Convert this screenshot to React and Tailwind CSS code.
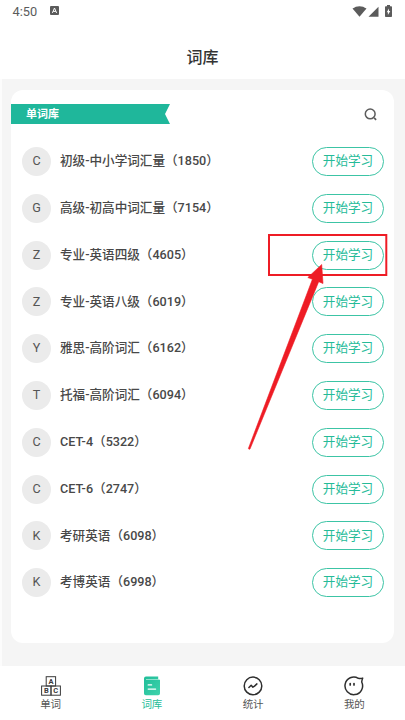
import { useState } from 'react';

const WORD_BOOKS = [
  { letter: 'C', name: '初级-中小学词汇量（1850）' },
  { letter: 'G', name: '高级-初高中词汇量（7154）' },
  { letter: 'Z', name: '专业-英语四级（4605）' },
  { letter: 'Z', name: '专业-英语八级（6019）' },
  { letter: 'Y', name: '雅思-高阶词汇（6162）' },
  { letter: 'T', name: '托福-高阶词汇（6094）' },
  { letter: 'C', name: 'CET-4（5322）' },
  { letter: 'C', name: 'CET-6（2747）' },
  { letter: 'K', name: '考研英语（6098）' },
  { letter: 'K', name: '考博英语（6998）' },
];

function BlocksIcon() {
  return (
    <svg width="20" height="20" viewBox="0 0 20 20" fill="none" stroke="#3a3a3a" strokeWidth="1">
      <rect x="5.2" y="0.7" width="9.4" height="9.3" />
      <rect x="0.6" y="10" width="9.4" height="9.2" />
      <rect x="10" y="10" width="9.4" height="9.2" />
      <g fill="#3a3a3a" stroke="none" fontFamily="Roboto, sans-serif" fontSize="7.5" fontWeight="700" textAnchor="middle">
        <text x="9.9" y="8.1">A</text>
        <text x="5.3" y="17.3">B</text>
        <text x="14.7" y="17.3">C</text>
      </g>
    </svg>
  );
}

function BookIcon() {
  return (
    <svg width="20" height="20" viewBox="0 0 20 20" fill="none">
      <defs>
        <linearGradient id="book" x1="0" y1="0" x2="1" y2="1">
          <stop offset="0" stopColor="#1fbd99" />
          <stop offset="1" stopColor="#3fd3ac" />
        </linearGradient>
      </defs>
      <path d="M4 .6h12.2v3.2H18v13.6a1.8 1.8 0 0 1-1.8 1.8H3.8A1.8 1.8 0 0 1 2 17.4V2.6a2 2 0 0 1 2-2Z" fill="url(#book)" />
      <path d="M4 3.5h12.6" stroke="#a9ead8" strokeWidth=".8" />
      <path d="M6.2 8.9h3.4M6.2 13.1h7.4" stroke="#fff" strokeWidth="1.3" strokeLinecap="round" />
    </svg>
  );
}

function StatsIcon() {
  return (
    <svg width="20" height="20" viewBox="0 0 20 20" fill="none" stroke="#2f2f2f" strokeLinecap="round" strokeLinejoin="round">
      <circle cx="10" cy="9.9" r="8.8" strokeWidth="1.5" />
      <path d="m5.9 11.5 2.3-2.3 1.700 2 1.600-1.100 2.400-2.200" strokeWidth="1.5" />
    </svg>
  );
}

function MineIcon() {
  return (
    <svg width="20" height="20" viewBox="0 0 20 20" fill="none" stroke="#2f2f2f" strokeWidth="1.5" strokeLinecap="round" strokeLinejoin="round">
      <path d="M14.3 2.3A8.8 8.8 0 1 0 17.7 6c.2-1.4.5-2.6 1-3.9-1.4.5-2.7.6-4.4.2Z" />
      <path d="M6.2 7.5v1.4M10 7.5v1.4" strokeWidth="1.7" />
    </svg>
  );
}

const TABS = [
  { id: 'words', label: '单词', Icon: BlocksIcon },
  { id: 'library', label: '词库', Icon: BookIcon },
  { id: 'stats', label: '统计', Icon: StatsIcon },
  { id: 'mine', label: '我的', Icon: MineIcon },
];

function StatusBar() {
  return (
    <div className="flex h-6 items-center justify-between pl-[12.5px] pr-[13px] text-[#5b5b5b]">
      <div className="flex items-center gap-[12px]">
        <span className="w-[25px] whitespace-nowrap text-[12.8px] leading-none">4:50</span>
        <svg width="9" height="9" viewBox="0 0 9 9" className="-mt-0.5">
          <rect width="9" height="9" rx="1" fill="currentColor" />
          <path d="M2.4 6.9 4.5 2l2.1 4.9M3.2 5.4h2.6" fill="none" stroke="#fff" strokeWidth="1" />
        </svg>
      </div>
      <div className="-mt-0.5 flex items-center">
        <svg width="15" height="11" viewBox="0 0 15 11" fill="currentColor">
          <path d="M.5 2.6C4.8-.7 10.2-.7 14.5 2.6L7.5 10.8Z" />
        </svg>
        <svg width="11" height="11" viewBox="0 0 11 11" fill="currentColor" className="ml-px">
          <path d="M10.5.8v10H.5Z" />
        </svg>
        <svg width="7" height="12" viewBox="0 0 7 12" fill="currentColor" className="ml-1.5">
          <path d="M2 0h3v1.2h1.2q.8 0 .8.8v9.2q0 .8-.8.8H.8Q0 12 0 11.2V2q0-.8.8-.8H2Z" />
          <path d="M4 3.5 1.7 7.2h1.2V10l2.4-3.900H4Z" fill="#fff" />
        </svg>
      </div>
    </div>
  );
}

function BookRow({ letter, name }) {
  return (
    <li className="flex h-[46.8px] items-center pl-[11px] pr-[10px]">
      <span className="flex size-[29px] shrink-0 items-center justify-center rounded-full bg-[#ebebeb] text-[12.6px] text-[#555]">
        {letter}
      </span>
      <span className="ml-[9px] flex-1 whitespace-nowrap text-[12.6px] font-medium text-[#484848]">{name}</span>
      <button className="h-[29px] w-[72px] shrink-0 rounded-full border border-[#3cc4a5] text-[12.6px] leading-none text-[#25bb98]">
        开始学习
      </button>
    </li>
  );
}

export default function App() {
  const [activeTab, setActiveTab] = useState('library');

  return (
    <div className="relative flex h-[720px] w-[405px] flex-col overflow-hidden bg-white font-[Roboto,'Noto_Sans_CJK_SC',sans-serif]">
      <StatusBar />
      <header className="flex h-[55px] items-center justify-center pt-[13px] text-[16px] font-medium text-[#333]">
        词库
      </header>

      <main className="h-[587px] border-l-2 border-[#fcfcfc] bg-[#f5f5f5] pl-[9px] pr-[11px] pt-[11px]">
        <section className="h-[553px] rounded-[12px] bg-white">
          <div className="flex h-[48.2px] items-start justify-between pt-[14px]">
            <h2 className="flex h-5 w-[159px] items-center bg-[#1fb79b] pl-[15px] pt-[2px] text-[11px] font-bold text-white [clip-path:polygon(0_0,100%_0,calc(100%-5px)_50%,100%_100%,0_100%)]">
              单词库
            </h2>
            <svg width="14" height="14" viewBox="0 0 14 14" fill="none" stroke="#5c5c5c" className="mr-[16px] mt-[4px]">
              <circle cx="6.2" cy="5.9" r="4.9" strokeWidth="1.5" />
              <path d="m10.200 9.900 1.900 1.900" strokeWidth="1.7" />
            </svg>
          </div>
          <ul>
            {WORD_BOOKS.map((book) => (
              <BookRow key={book.name} {...book} />
            ))}
          </ul>
        </section>
      </main>

      <nav className="grid flex-1 grid-cols-4">
        {TABS.map(({ id, label, Icon }) => (
          <button
            key={id}
            onClick={() => setActiveTab(id)}
            className={`flex flex-col items-center pt-[9.5px] text-[10.5px] leading-none ${
              activeTab === id ? 'text-[#26bd98]' : 'text-[#555]'
            }`}
          >
            <Icon />
            <span className="mt-[4px]">{label}</span>
          </button>
        ))}
      </nav>

      {/* Highlight frame and arrow pointing at the start button */}
      <svg className="pointer-events-none absolute left-[245px] top-[230px]" width="145" height="222" viewBox="245 230 145 222">
        <rect x="269" y="235" width="117.3" height="40" fill="none" stroke="#ee1c25" strokeWidth="2" />
        <path
          d="M321.7 264.5 307.8 277.5 312.4 279.3 248.4 448.4Q248.8 449.7 250 449L318.7 281.7 323 283.5Z"
          fill="#ee1c25"
          stroke="#ee1c25"
          strokeWidth=".6"
        />
      </svg>
    </div>
  );
}
